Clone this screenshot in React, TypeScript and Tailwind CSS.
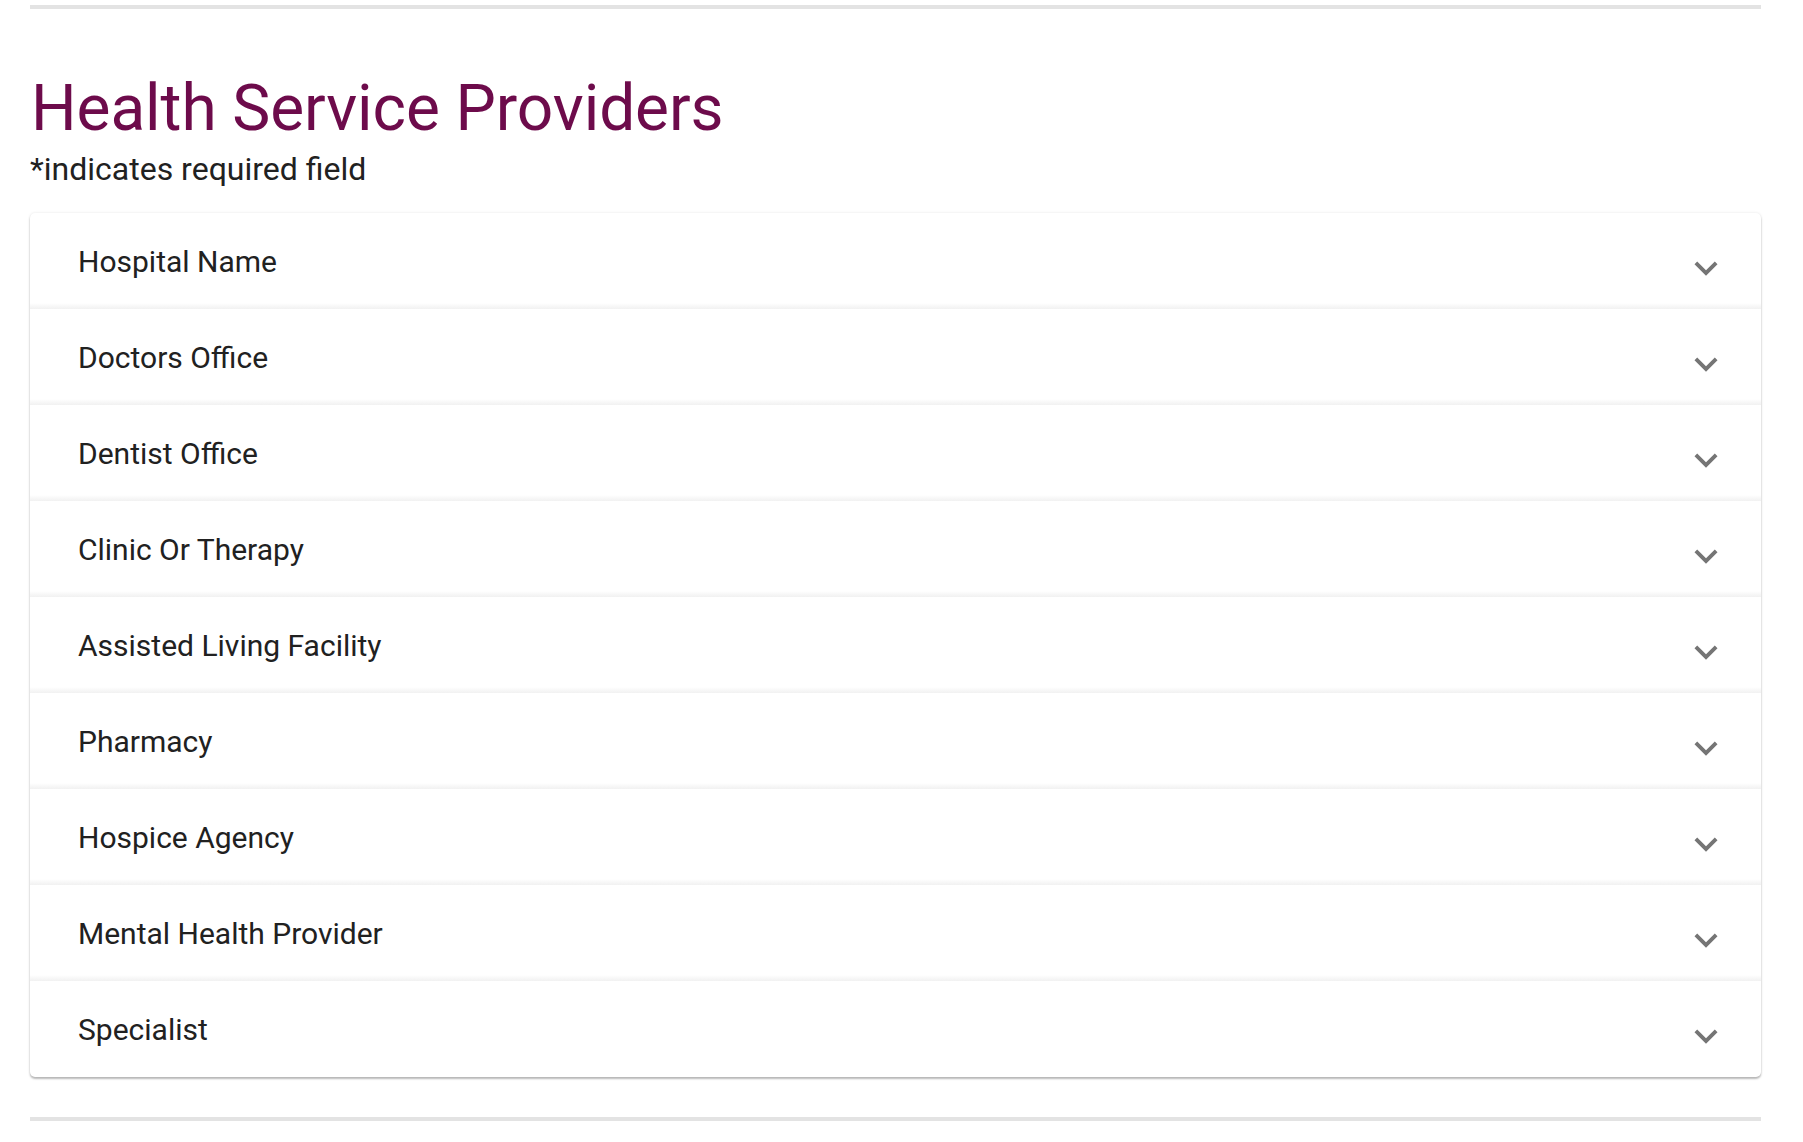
import React from "react";

const items = [
  "Hospital Name",
  "Doctors Office",
  "Dentist Office",
  "Clinic Or Therapy",
  "Assisted Living Facility",
  "Pharmacy",
  "Hospice Agency",
  "Mental Health Provider",
  "Specialist",
];

function Chevron() {
  return (
    <svg width="46" height="46" viewBox="0 0 24 24" className="mt-[14px] shrink-0" fill="#757575">
      <path d="M16.59 8.59 12 13.17 7.41 8.59 6 10l6 6 6-6z" />
    </svg>
  );
}

export default function App() {
  return (
    <div className="min-h-[1142px] bg-white pl-[30px] pr-[42px]" style={{ fontFamily: "Roboto, 'Noto Sans', sans-serif" }}>
      <div className="pt-[5px]">
        <div className="h-[4px] bg-[#e3e3e3]" />
      </div>
      <h1 className="mt-[62px] text-[64px] leading-[76px] font-normal text-[#6d0b4b] ml-[1px] tracking-[-0.1px]">
        Health Service Providers
      </h1>
      <p className="mt-[3px] text-[32px] leading-[38px] text-[#212121]">*indicates required field</p>
      <div className="mt-[25px] overflow-hidden rounded-[5px] bg-white shadow-[0px_2px_2px_0px_rgba(0,0,0,0.26),0px_0px_3px_0px_rgba(0,0,0,0.1)]">
        {items.map((label, i) => (
          <div key={label} className="flex flex-col">
            <div className="flex h-[96px] items-center justify-between pl-[48px] pr-[32px]">
              <span className="text-[30px] text-[#212121]">{label}</span>
              <Chevron />
            </div>
            {i < items.length - 1 && <div className="-mt-[6px] h-[6px] bg-gradient-to-b from-white to-[#f1f1f1]" />}
          </div>
        ))}
      </div>
      <div className="mt-[40px] h-[4px] bg-[#e3e3e3]" />
    </div>
  );
}
